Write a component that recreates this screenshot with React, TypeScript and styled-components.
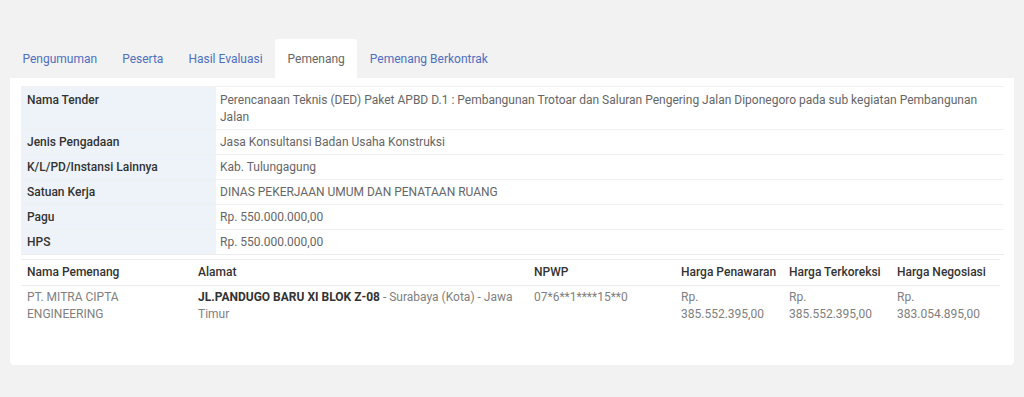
import styled, { createGlobalStyle } from "styled-components";

const GlobalStyle = createGlobalStyle`
  body {
    margin: 0;
    background: #f2f2f2;
    font-family: Roboto, "Liberation Sans", sans-serif;
    font-size: 12px;
    color: #666;
  }
`;

const Page = styled.div`
  padding: 39px 10px 32px;
`;

const Tabs = styled.ul`
  display: flex;
  list-style: none;
  margin: 0;
  padding: 0;
`;

const Tab = styled.li<{ $active?: boolean }>`
  padding: 0 12.5px;
  height: 39px;
  display: flex;
  align-items: center;
  font-size: 12px;
  color: ${(p) => (p.$active ? "#666" : "#4f6fbf")};
  background: ${(p) => (p.$active ? "#fff" : "transparent")};
  border-radius: 3px 3px 0 0;
`;

const Card = styled.div`
  background: #fff;
  border-radius: 0 0 4px 4px;
  padding: 8px 11px 38px;
`;

const InfoTable = styled.table`
  width: 983px;
  border-collapse: collapse;
  line-height: 17px;

  td {
    border-top: 1px solid #f0f0f0;
    padding: 4px 4px 3px 6px;
    vertical-align: top;
  }
  tr:first-child td {
    padding-top: 5px;
  }
  tr:last-child td {
    border-bottom: 1px solid #ececec;
  }
`;

const Label = styled.td`
  width: 185px;
  background: #eef3f9;
  color: #333;
  font-weight: 500;
`;

const Value = styled.td`
  color: #666;
  && {
    padding-left: 4px;
  }
`;

const WinnerTable = styled.table`
  width: 979px;
  margin-top: 4px;
  border-collapse: collapse;
  table-layout: fixed;
  line-height: 17px;

  th {
    box-sizing: border-box;
    text-align: left;
    font-weight: 500;
    color: #333;
    padding: 4px 6px;
    border-top: 1px solid #ececec;
    border-bottom: 1px solid #ececec;
    white-space: nowrap;
  }
  th:nth-child(1) { width: 171px; }
  th:nth-child(2) { width: 336px; }
  th:nth-child(3) { width: 147px; }
  th:nth-child(4) { width: 108px; }
  th:nth-child(5) { width: 108px; }
  td {
    padding: 3px 6px 4px;
    vertical-align: top;
    color: #808080;
  }
`;

const Strong = styled.b`
  color: #333;
  font-weight: 700;
`;

const info: [string, string][] = [
  [
    "Nama Tender",
    "Perencanaan Teknis (DED) Paket APBD D.1 : Pembangunan Trotoar dan Saluran Pengering Jalan Diponegoro pada sub kegiatan Pembangunan Jalan",
  ],
  ["Jenis Pengadaan", "Jasa Konsultansi Badan Usaha Konstruksi"],
  ["K/L/PD/Instansi Lainnya", "Kab. Tulungagung"],
  ["Satuan Kerja", "DINAS PEKERJAAN UMUM DAN PENATAAN RUANG"],
  ["Pagu", "Rp. 550.000.000,00"],
  ["HPS", "Rp. 550.000.000,00"],
];

const tabs = ["Pengumuman", "Peserta", "Hasil Evaluasi", "Pemenang", "Pemenang Berkontrak"];

export default function App() {
  return (
    <Page>
      <GlobalStyle />
      <Tabs>
        {tabs.map((t) => (
          <Tab key={t} $active={t === "Pemenang"}>
            {t}
          </Tab>
        ))}
      </Tabs>
      <Card>
        <InfoTable>
          <tbody>
            {info.map(([k, v]) => (
              <tr key={k}>
                <Label>{k}</Label>
                <Value>{v}</Value>
              </tr>
            ))}
          </tbody>
        </InfoTable>
        <WinnerTable>
          <thead>
            <tr>
              <th>Nama Pemenang</th>
              <th>Alamat</th>
              <th>NPWP</th>
              <th>Harga Penawaran</th>
              <th>Harga Terkoreksi</th>
              <th>Harga Negosiasi</th>
            </tr>
          </thead>
          <tbody>
            <tr>
              <td>PT. MITRA CIPTA ENGINEERING</td>
              <td>
                <Strong>JL.PANDUGO BARU XI BLOK Z-08</Strong> - Surabaya (Kota) - Jawa Timur
              </td>
              <td>07*6**1****15**0</td>
              <td>Rp. 385.552.395,00</td>
              <td>Rp. 385.552.395,00</td>
              <td>Rp. 383.054.895,00</td>
            </tr>
          </tbody>
        </WinnerTable>
      </Card>
    </Page>
  );
}
